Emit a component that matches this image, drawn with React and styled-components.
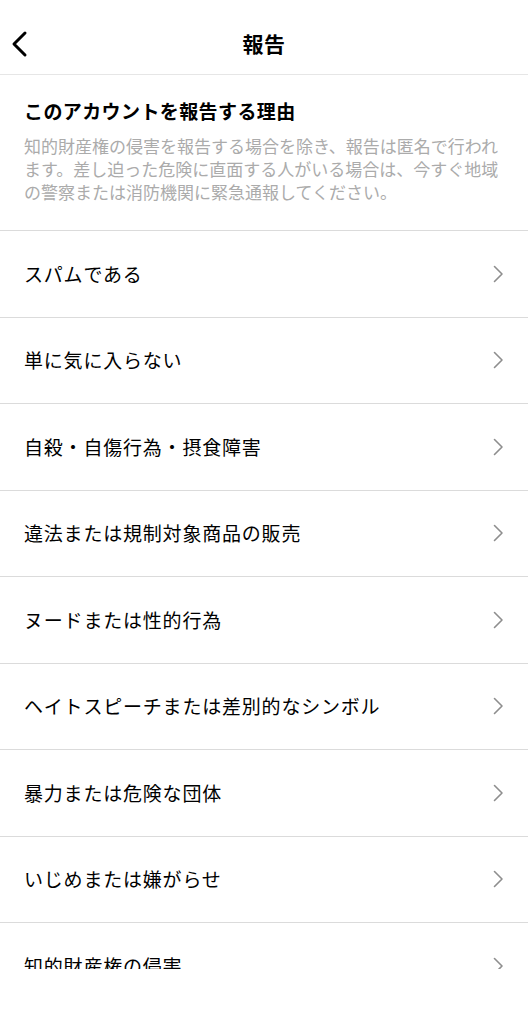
import React from 'react'
import styled, {createGlobalStyle} from 'styled-components'

const GlobalStyle = createGlobalStyle`
  html, body {
    margin: 0;
    padding: 0;
    background: #ffffff;
  }
  body {
    font-family: "Noto Sans CJK JP", "Noto Sans", sans-serif;
    color: #000;
  }
`

const reasons = [
  'スパムである',
  '単に気に入らない',
  '自殺・自傷行為・摂食障害',
  '違法または規制対象商品の販売',
  'ヌードまたは性的行為',
  'ヘイトスピーチまたは差別的なシンボル',
  '暴力または危険な団体',
  'いじめまたは嫌がらせ',
  '知的財産権の侵害',
  '詐欺・虚偽',
]

function App() {
  return (
    <>
      <GlobalStyle />
      <Screen>
        <Header>
          <BackButton aria-label="戻る">
            <svg width="20" height="28" viewBox="0 0 20 28" fill="none">
              <path d="M15 3 L4 14 L15 25" stroke="#000" strokeWidth="3" strokeLinecap="round" strokeLinejoin="round" />
            </svg>
          </BackButton>
          <Title>報告</Title>
        </Header>
        <Scroll>
          <Intro>
            <IntroTitle>このアカウントを報告する理由</IntroTitle>
            <IntroText>
              知的財産権の侵害を報告する場合を除き、報告は匿名で行われます。差し迫った危険に直面する人がいる場合は、今すぐ地域の警察または消防機関に緊急通報してください。
            </IntroText>
          </Intro>
          <List>
            {reasons.map((r) => (
              <Row key={r}>
                <RowLabel>{r}</RowLabel>
                <svg width="12" height="18" viewBox="0 0 12 18" fill="none">
                  <path d="M2.5 1.5 L10 9 L2.5 16.5" stroke="#8e8e8e" strokeWidth="1.6" strokeLinecap="round" strokeLinejoin="round" />
                </svg>
              </Row>
            ))}
          </List>
        </Scroll>
      </Screen>
    </>
  )
}

export default App

const Screen = styled.div`
  width: 528px;
  height: 1024px;
  display: flex;
  flex-direction: column;
  background: #fff;
`

const Header = styled.div`
  height: 75px;
  flex-shrink: 0;
  display: flex;
  align-items: center;
  justify-content: center;
  position: relative;
  border-bottom: 1px solid #e6e6e6;
  padding-top: 12px;
  box-sizing: border-box;
`

const BackButton = styled.button`
  position: absolute;
  left: 10px;
  top: 30px;
  background: none;
  border: none;
  padding: 0;
  display: flex;
`

const Title = styled.div`
  font-size: 21px;
  font-weight: 700;
  line-height: 26px;
  letter-spacing: 0.5px;
`

const Scroll = styled.div`
  height: 894px;
  overflow: hidden;
  flex-shrink: 0;
`

const Intro = styled.div`
  padding: 23px 24px 27px;
  border-bottom: 1px solid #dbdbdb;
`

const IntroTitle = styled.div`
  font-size: 19px;
  font-weight: 700;
  line-height: 26px;
  letter-spacing: 0.4px;
  margin-bottom: 10px;
`

const IntroText = styled.div`
  font-size: 17px;
  line-height: 23px;
  color: #ababab;
`

const List = styled.div`
  display: flex;
  flex-direction: column;
`

const Row = styled.div`
  height: 86.5px;
  display: flex;
  align-items: center;
  justify-content: space-between;
  padding: 0 24px;
  border-bottom: 1px solid #dbdbdb;
  box-sizing: border-box;
`

const RowLabel = styled.div`
  font-size: 19px;
  line-height: 26px;
  letter-spacing: 0.8px;
  color: #000;
`
